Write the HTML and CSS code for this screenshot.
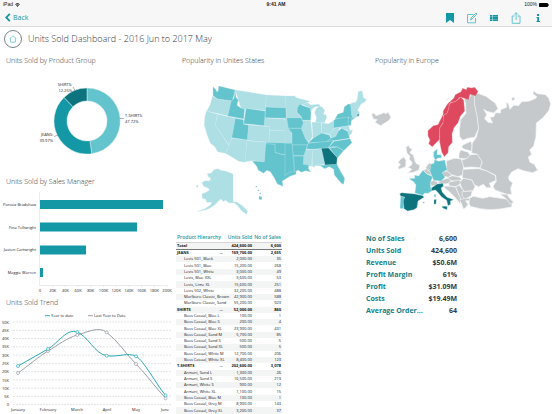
FILE: index.html
```html
<!DOCTYPE html>
<html lang="en">
<head>
<meta charset="utf-8">
<meta name="viewport" content="width=device-width, initial-scale=1">
<title>Units Sold Dashboard</title>
<link rel="stylesheet" href="styles.css">
</head>
<body>
<header class="topbar">
  <div class="status">
    <span class="status-left">iPad
      <svg class="wifi" viewBox="0 0 12 10" aria-hidden="true"><path d="M0 3Q6-2 12 3L10.700 4.500Q6 .8 1.300 4.500ZM2.300 5.500Q6 2.500 9.700 5.500L8.300 7Q6 5.200 3.700 7ZM4.500 8Q6 6.800 7.500 8L6 9.700Z"/></svg>
    </span>
    <strong class="clock">9:41 AM</strong>
    <span class="status-right">100%
      <svg class="battery" viewBox="0 0 20 8" aria-hidden="true"><rect width="18" height="8" rx="1.500"/><rect x="18.500" y="2.500" width="1.500" height="3"/></svg>
    </span>
  </div>
  <nav class="toolbar">
    <a class="back" href="#"><svg class="chevron" viewBox="0 0 6 10" aria-hidden="true"><path d="M5 1L1 5L5 9"/></svg>Back</a>
    <div class="tools">
      <button type="button" aria-label="Bookmark"><svg viewBox="0 0 12 12"><path class="fill" d="M2 1H10V11L6 8L2 11Z"/></svg></button>
      <button type="button" aria-label="Edit"><svg viewBox="0 0 12 12"><path class="line" d="M7.500 2.500H1.500V10.800H9.500V6M4.500 8L5 6L10 1L11 2L6 7Z"/></svg></button>
      <button type="button" aria-label="List"><svg viewBox="0 0 12 12"><path class="fill" d="M2 3H4V4.800H2ZM4.500 3H10V4.800H4.500ZM2 5.100H4V6.900H2ZM4.500 5.100H10V6.900H4.500ZM2 7.200H4V9H2ZM4.500 7.200H10V9H4.500Z"/></svg></button>
      <button type="button" aria-label="Share"><svg viewBox="0 0 12 12"><path class="line" d="M4.500 4H2.200V11.300H10V4H7.700M6.100 8V.8M4.200 2.600L6.100.7L8 2.600"/></svg></button>
      <button type="button" aria-label="Information"><svg viewBox="0 0 12 12"><path class="fill" d="M5 2H7V4H5ZM4.500 5H7V9H8V10H4.500V9H5.200V6H4.500Z"/></svg></button>
    </div>
  </nav>
</header>

<div class="title-row">
  <a class="home" href="#" aria-label="Home"><svg viewBox="0 0 10 10"><path d="M.8 4.700L5 1L9.200 4.700M2 4V9H8V4"/></svg></a>
  <h1>Units Sold Dashboard - 2016 Jun to 2017 May</h1>
</div>

<main class="dashboard">
  <div class="column">
    <section>
      <h2>Units Sold by Product Group</h2>
      <svg class="chart" viewBox="0 67 176 109" role="img" aria-label="Share by product group">
        <g class="donut">
          <path class="mid" d="M87 88A33 33 0 0 1 91.700 153.700L89.900 140.800A20 20 0 0 0 87 101Z"/>
          <path class="teal" d="M91.700 153.700A33 33 0 0 1 64 97.400L73 106.700A20 20 0 0 0 89.900 140.800Z"/>
          <path class="dark" d="M64 97.400A33 33 0 0 1 87 88V101A20 20 0 0 0 73 106.700Z"/>
        </g>
        <path class="leader" d="M120 118.500H124M54 136.500L58 135M73 87L75 90.500"/>
        <g class="label"><text x="72" y="86" text-anchor="end">SHIRTS:</text><text x="72" y="92" text-anchor="end">12.25%</text>
        <text x="125" y="117">T-SHIRTS:</text><text x="125" y="123">47.72%</text>
        <text x="53" y="136" text-anchor="end">JEANS:</text><text x="53" y="142" text-anchor="end">39.97%</text></g>
      </svg>
    </section>
    <section>
      <h2>Units Sold by Sales Manager</h2>
      <svg class="chart" viewBox="0 188 176 109" role="img" aria-label="Units by sales manager">
        <path class="axis" d="M39.500 192V285.500H167.500M52.700 285V287M65.400 285V287M78.100 285V287M90.800 285V287M103.500 285V287M116.200 285V287M128.900 285V287M141.600 285V287M154.300 285V287M167 285V287"/>
        <g class="teal"><rect x="40" y="200" width="123" height="9"/><rect x="40" y="222.500" width="97" height="9"/><rect x="40" y="245.500" width="46" height="9"/><rect x="40" y="268" width="3" height="9"/></g>
        <g class="label" text-anchor="end"><text x="36" y="206">Parvaiz Bradshaw</text><text x="36" y="229">Fina Tellwright</text><text x="36" y="251">Justen Cartwright</text><text x="36" y="274">Maggie Warren</text></g>
        <g class="label" text-anchor="middle"><text x="40" y="292">0</text><text x="52.700" y="292">20K</text><text x="65.400" y="292">40K</text><text x="78.100" y="292">60K</text><text x="90.800" y="292">80K</text><text x="103.500" y="292">100K</text><text x="116.200" y="292">120K</text><text x="128.900" y="292">140K</text><text x="141.600" y="292">160K</text><text x="154.300" y="292">180K</text><text x="167" y="292">200K</text></g>
      </svg>
    </section>
    <section>
      <h2>Units Sold Trend</h2>
      <svg class="chart" viewBox="0 309 176 105" role="img" aria-label="Monthly trend">
        <path class="grid" d="M13 322H172M13 330.300H172M13 338.600H172M13 346.800H172M13 355.100H172M13 363.400H172M13 371.600H172M13 379.900H172M13 388.200H172M13 396.400H172M13 404.700H172"/>
        <g class="label" text-anchor="end"><text x="9" y="324">50K</text><text x="9" y="332">45K</text><text x="9" y="340">40K</text><text x="9" y="348">35K</text><text x="9" y="357">30K</text><text x="9" y="365">25K</text><text x="9" y="373">20K</text><text x="9" y="382">15K</text><text x="9" y="390">10K</text><text x="9" y="398">5K</text><text x="9" y="406">0</text></g>
        <g class="label" text-anchor="middle"><text x="18" y="411">January</text><text x="48" y="411">February</text><text x="77" y="411">March</text><text x="107" y="411">April</text><text x="136" y="411">May</text><text x="165" y="411">June</text></g>
        <g class="series last"><path d="M88 315.700H93M18 373C28 366 38 357 48 351S67 338 77.300 335S99 326 106.700 332.300C118 341 126 354 136 364S156 388 165.500 398.300"/><circle cx="18" cy="373" r="1.500"/><circle cx="48" cy="351" r="1.500"/><circle cx="77.300" cy="335" r="1.500"/><circle cx="106.700" cy="332.300" r="1.500"/><circle cx="136" cy="364" r="1.500"/><circle cx="165.500" cy="398.300" r="1.500"/></g>
        <g class="series now"><path d="M45 315.700H50M18 366C28 360 38 355 48 349S67 328 77.300 332S95 354 106.700 355.700S128 352 136 356.300S156 384 165.500 395.300"/><circle cx="18" cy="366" r="1.500"/><circle cx="48" cy="349" r="1.500"/><circle cx="77.300" cy="332" r="1.500"/><circle cx="106.700" cy="355.700" r="1.500"/><circle cx="136" cy="356.300" r="1.500"/><circle cx="165.500" cy="395.300" r="1.500"/></g>
        <g class="label"><text x="51" y="317">Year to date</text><text x="94" y="317">Last Year to Date</text></g>
      </svg>
    </section>
  </div>

  <div class="column">
    <section>
      <h2>Popularity in Unites States</h2>
      <svg class="chart map" viewBox="176 67 190 166" role="img" aria-label="Map of the United States">
        <g transform="translate(195 75) scale(.3333)">
          <g class="light">
            <path d="M53 64L68 73L110 78L98 122L36 108L46 88Z"/>
            <path d="M34 108L67 118L61 150L102 212L92 235L68 230L60 215L46 204L36 178L28 150L30 125Z"/>
            <path d="M68 118L122 130L110 188L102 210L61 150Z"/>
            <path d="M121 45L214 60L211 106L153 100L149 104L138 98L130 75Z"/>
            <path d="M161 150L224 155L222 202L156 196Z"/>
            <path d="M110 190L156 196L150 262L132 259L92 235L102 212Z"/>
            <path d="M156 197L213 202L208 260L170 257L150 260Z"/>
            <path d="M214 60L271 63L274 98L212 96Z"/>
            <path d="M210 129L265 132L280 140L290 168L224 165V155L208 152Z"/>
            <path d="M224 166L290 168L292 203L222 202Z"/>
            <path d="M37 296L50 294L55 286L68 281L80 287L91 288L114 297V380L126 382L144 394L158 409L154 418L139 406L128 392L118 384L101 383L91 375L86 380L77 372L68 380L60 389L45 399L31 405L8 409L28 402L46 391L51 382L36 382L32 373L22 370L21 357L37 350L44 344L38 338L26 334L21 322L32 317L43 319L48 310L40 305Z"/>
            <circle cx="7" cy="334" r="3"/>
          </g>
          <g class="mid">
            <path d="M54 35L62 43L66 51L70 46L71 33L121 45L112 78L68 72L54 62Z"/>
            <path d="M121 45L123 67L130 75L126 91L138 99L149 103L146 132L98 123L108 80L117 70Z"/>
            <path d="M153 100L211 108L208 152L146 146Z"/>
            <path d="M121 130L146 134V148L161 150L157 195L110 188Z"/>
            <path d="M212 96L273 98L275 132L265 130L210 128Z"/>
            <path d="M213 202L292 204L297 243L272 240L255 237L240 232V208H213Z"/>
            <path d="M212 206L240 208V232L255 237L272 240L300 243L305 270L303 298L285 304L262 318L264 334L247 327L238 309L226 290L215 286L206 295L190 286L185 274L172 258L208 260Z"/>
            <path d="M192 364L201 366L200 374L192 373Z"/>
            <circle cx="184" cy="335" r="2"/><circle cx="190" cy="346" r="2"/><circle cx="196" cy="355" r="2"/>
          </g>
        </g>
        <g transform="translate(285 75) scale(.3333)">
          <g class="light">
            <path d="M1 63H29L34 68L50 73L75 79L53 88L38 98L36 112L50 128H5L3 95Z"/>
            <path d="M52 88L68 83L77 90L102 88L106 94L92 95L83 100L79 107L74 99Z"/>
            <path d="M92 141L95 128L89 113L94 101L103 94L111 96L119 106L115 119L121 118L125 127L118 143Z"/>
            <path d="M50 137H77L82 185L72 202L61 190L48 160Z"/>
            <path d="M81 142H108L110 175L84 190Z"/>
            <path d="M110 143L130 147L145 138L148 158L135 178L110 173Z"/>
            <path d="M135 178L148 160L165 157L158 171L150 185L138 190Z"/>
            <path d="M197 86L211 81L218 106L224 113L220 124L202 131L199 119Z"/>
            <path d="M211 87L217 72L220 50L231 47L235 68L245 74L238 82L228 87L218 105Z"/>
            <path d="M162 158L191 152L195 167L202 164L200 175L192 183L187 165Z"/>
            <path d="M58 224H82L80 274L54 270V240Z"/>
            <path d="M82 224L109 221L119 268L90 271L88 277L82 274Z"/>
            <path d="M0 128H5L17 160L21 205H0Z"/>
          </g>
          <g class="mid">
            <path d="M5 128H49L55 143L49 160H10Z"/>
            <path d="M37 98L44 88L55 92L76 100L78 112L77 136H52L49 125L36 112Z"/>
            <path d="M10 160H49L61 190L71 204L68 210H21V175Z"/>
            <path d="M21 210H68L64 222L56 242H25Z"/>
            <path d="M26 243H56L55 268L72 271L70 280L77 291L62 287L49 292L40 286L28 290Z"/>
            <path d="M0 205H21L28 290L14 291L0 302Z"/>
            <path d="M146 136L153 131L188 124L194 137L190 152L146 159Z"/>
            <path d="M150 132L158 118L175 112L178 95L190 87L197 88L200 120L203 130L213 127L198 137L190 126Z"/>
            <path d="M190 127L200 131L197 152L189 151Z"/>
            <path d="M122 201L138 190L152 184L160 168L170 160L188 169L194 190Z"/>
            <path d="M70 204L84 190L110 174L133 180L138 191L122 201Z"/>
            <path d="M64 222L70 205L145 197L130 219L82 223Z"/>
            <path d="M130 218L147 199L195 191L201 203L188 216L176 227L158 216L145 215Z"/>
            <path d="M133 218L158 216L176 227L157 249Z"/>
            <path d="M90 272L120 270L155 266L164 284L179 310L176 328L169 325L148 300L146 283L133 275L119 281L107 273Z"/>
          </g>
          <g class="dark"><path d="M109 220L131 219L137 226L157 248L155 268L120 270Z"/><path d="M216 119L223 117L221 123L217 123Z"/></g>
        </g>
      </svg>
    </section>
    <div class="table-wrap">
      <table>
        <colgroup><col><col class="units"><col class="sales"></colgroup>
        <thead><tr><th scope="col">Product Hierarchy</th><th scope="col">Units Sold</th><th scope="col">No of Sales</th></tr></thead>
        <tbody>
          <tr class="total"><th scope="row">Total</th><td>424,600.00</td><td>6,600</td></tr>
          <tr class="group"><th scope="row"><div><span>JEANS</span><span>...</span></div></th><td>169,700.00</td><td>2,655</td></tr>
          <tr><th scope="row">Levis 501, Black</th><td>2,000.00</td><td>35</td></tr>
          <tr><th scope="row">Levis 501, Blue</th><td>15,200.00</td><td>268</td></tr>
          <tr><th scope="row">Levis 501, White</th><td>3,000.00</td><td>49</td></tr>
          <tr><th scope="row">Levis, Blue XXL</th><td>3,600.00</td><td>53</td></tr>
          <tr><th scope="row">Levis, Lime XL</th><td>15,600.00</td><td>251</td></tr>
          <tr><th scope="row">Levis 502, White</th><td>32,200.00</td><td>488</td></tr>
          <tr><th scope="row">Marlboro Classic, Brown</th><td>42,900.00</td><td>588</td></tr>
          <tr><th scope="row">Marlboro Classic, Sand</th><td>55,200.00</td><td>923</td></tr>
          <tr class="group"><th scope="row"><div><span>SHIRTS</span><span>...</span></div></th><td>52,000.00</td><td>860</td></tr>
          <tr><th scope="row">Boss Casual, Blue L</th><td>100.00</td><td>1</td></tr>
          <tr><th scope="row">Boss Casual, Blue S</th><td>200.00</td><td>4</td></tr>
          <tr><th scope="row">Boss Casual, Blue XL</th><td>23,900.00</td><td>431</td></tr>
          <tr><th scope="row">Boss Casual, Sand M</th><td>5,700.00</td><td>85</td></tr>
          <tr><th scope="row">Boss Casual, Sand S</th><td>500.00</td><td>5</td></tr>
          <tr><th scope="row">Boss Casual, Sand XL</th><td>500.00</td><td>5</td></tr>
          <tr><th scope="row">Boss Casual, White M</th><td>12,700.00</td><td>206</td></tr>
          <tr><th scope="row">Boss Casual, White XL</th><td>8,400.00</td><td>123</td></tr>
          <tr class="group"><th scope="row"><div><span>T-SHIRTS</span><span>...</span></div></th><td>202,600.00</td><td>3,078</td></tr>
          <tr><th scope="row">Armani, Sand L</th><td>1,300.00</td><td>26</td></tr>
          <tr><th scope="row">Armani, Sand S</th><td>16,500.00</td><td>219</td></tr>
          <tr><th scope="row">Armani, White S</th><td>900.00</td><td>12</td></tr>
          <tr><th scope="row">Armani, White XL</th><td>1,100.00</td><td>15</td></tr>
          <tr><th scope="row">Boss Casual, Blue M</th><td>100.00</td><td>1</td></tr>
          <tr><th scope="row">Boss Casual, Grey M</th><td>8,900.00</td><td>143</td></tr>
          <tr><th scope="row">Boss Casual, Grey XL</th><td>3,200.00</td><td>37</td></tr>
        </tbody>
      </table>
    </div>
  </div>

  <div class="column europe">
    <section>
      <h2>Popularity in Europe</h2>
      <svg class="chart map" viewBox="366 67 186 166" role="img" aria-label="Map of Europe">
        <g transform="translate(366 75) scale(.3333)">
          <g class="gray">
            <path d="M17 118L24 114L30 122L43 118L53 113L60 116L66 111L75 127L69 136L53 146L44 152L27 142L34 134L22 132Z"/>
            <path d="M120 217L128 211L131 219L139 222L132 233L142 241L147 258L151 266L162 271L158 286L142 292L125 294L138 283L126 277L137 270L138 261L129 253L132 244L123 235Z"/>
            <path d="M101 255L113 246L120 256L119 275L99 283L96 276L104 269L97 263Z"/>
            <path d="M173 286L183 280L193 291L196 301L183 297Z"/>
            <path d="M179 278L189 264L197 266L194 290L183 284Z"/>
            <path d="M191 322L202 316L217 322L211 331L197 333Z"/>
            <path d="M214 322L227 315L251 308L256 322L240 327L227 326Z"/>
            <path d="M227 292L243 288L258 300L247 307L229 303Z"/>
            <path d="M241 258L265 250L285 252L293 270L291 300L275 305L257 299L242 288Z"/>
            <path d="M244 308L260 302L281 307L288 314L274 319L256 317Z"/>
            <path d="M247 322L280 315L288 324L270 335L250 333Z"/>
            <path d="M232 333L252 334L269 336L276 353L286 373L282 385L268 368L249 349L239 342Z"/>
            <path d="M269 335L280 331L299 355L300 375L287 378L279 360Z"/>
            <path d="M281 374L298 370L314 370L310 377L299 377L306 388L299 398L292 402L288 390Z"/>
            <path d="M281 323L293 309L318 315L327 335L321 347L296 350L288 340Z"/>
            <path d="M288 350L319 348L315 363L298 372L289 364Z"/>
            <path d="M292 209L315 199L318 211L317 229L293 222L287 216Z"/>
            <path d="M279 237L284 225L305 231L313 241L302 252L279 250Z"/>
            <path d="M287 256L303 250L314 239L336 238L349 260L343 278L314 276L294 278Z"/>
            <path d="M291 283L339 281L363 288L388 302L390 316L370 325L376 338L362 338L352 328L337 335L325 329L318 315L289 309Z"/>
            <path d="M284 134L300 115L299 87L294 68L308 72L318 56L327 62L327 90L334 122L338 160L326 187L305 190L290 196L281 185L280 165Z"/>
            <path d="M325 62L335 55L360 64L388 85L396 101L383 114L363 109L353 103L362 118L356 131L366 142L380 144L372 126L383 126L389 113L404 114L404 104L422 97L421 82L427 86L432 103L443 91L458 92L467 80L488 79L507 71L513 66L501 56L503 48L514 56L538 59L548 69L554 87L549 106L531 128L511 144L510 185L503 213L491 225L497 238L487 246L492 262L505 268L515 286L500 293L476 288L456 281L437 291L428 305L429 315L440 324L434 340L437 358L423 358L409 353L387 345L381 334L391 319L389 301L363 288L342 280L349 261L334 238L317 234L319 205L331 187L338 160L333 122L326 90Z"/>
            <path d="M311 370L322 364L350 370L371 365L398 369L426 373L439 380L437 396L401 402L372 404L342 401L313 394L309 385Z"/>
            <path d="M402 357L423 358L431 370L443 382L432 388L421 371Z"/>
            <path d="M436 72L442 66L447 71L440 78Z"/>
          </g>
          <g class="red">
            <path d="M186 167L202 152L216 149L231 119L232 107L245 86L263 70L268 59L285 50L290 40L301 44L304 37L317 39L326 37L336 49L329 63L312 58L308 74L292 69L281 67L270 79L253 83L244 114L232 121L233 140L221 159L220 194L209 205L199 215L188 206L192 195L186 183Z"/>
            <path d="M233 121L244 114L252 85L270 79L284 67L293 75L296 108L283 124L276 143L264 158L258 177L259 202L248 215L246 233L235 245L227 230L221 200L221 159L231 145Z"/>
            <path d="M240 76L249 69M247 92L258 75M262 224L265 220"/>
          </g>
          <g class="mid">
            <path d="M203 231L214 221L213 239L225 239L227 248L216 249L208 255L203 246Z"/>
            <path d="M195 268L204 265L206 254L218 259L236 255L243 284L228 293L237 307L225 318L203 316L196 299L192 289Z"/>
            <path d="M129 311L147 310L145 301L158 303L171 286L182 297L200 305L193 323L194 339L198 347L186 355L176 354L170 361L147 354L150 330L143 320Z"/>
            <path d="M104 365L116 366L112 401L102 400Z"/><path d="M206 357L210 359L208 368L204 364Z"/>
          </g>
          <g class="dark">
            <path d="M101 356L107 353L147 357L171 362L174 367L156 378L153 398L143 404L125 408L114 401L112 378L116 366L104 364Z"/>
            <path d="M196 339L214 327L231 325L232 334L225 339L229 352L243 367L263 374L253 378L254 388L246 392L242 376L227 366L214 350L208 345L197 347Z"/>
            <path d="M228 394L244 394L243 404L230 399Z"/><path d="M204 374L211 373L210 387L204 388Z"/><path d="M170 382L175 381L174 385Z"/>
          </g>
        </g>
      </svg>
    </section>
    <dl class="metrics">
      <div><dt>No of Sales</dt><dd>6,600</dd></div>
      <div><dt>Units Sold</dt><dd>424,600</dd></div>
      <div><dt>Revenue</dt><dd>$50.6M</dd></div>
      <div><dt>Profit Margin</dt><dd>61%</dd></div>
      <div><dt>Profit</dt><dd>$31.09M</dd></div>
      <div><dt>Costs</dt><dd>$19.49M</dd></div>
      <div><dt>Average Order...</dt><dd>64</dd></div>
    </dl>
  </div>
</main>
</body>
</html>
```
FILE: styles.css
```css
:root {
  --teal: #1598a5;
  --mid: #64c4ce;
  --light: #addfe4;
  --dark: #0d737c;
  --ink: #34383c;
}

* { box-sizing: border-box; }

body {
  margin: 0;
  height: 100vh;
  display: flex;
  flex-direction: column;
  background: #fff;
  color: var(--ink);
  font-family: "Open Sans", "Noto Sans", sans-serif;
}

h1, h2, dl, dd { margin: 0; }
svg { display: block; }
a { color: inherit; text-decoration: none; }

.topbar {
  background: #f7f7f7;
  border-bottom: 1px solid #dcdcdc;
}

.status {
  display: grid;
  grid-template-columns: 1fr auto 1fr;
  align-items: center;
  height: 9px;
  padding: 0 3px;
  color: #222;
  font-family: "Liberation Sans", sans-serif;
  font-size: 5px;
  line-height: 9px;
}

.status-left, .status-right { display: flex; align-items: center; gap: 2px; }
.status-right { justify-content: flex-end; }
.wifi { width: 5px; height: 4px; }
.battery { width: 10px; height: 4px; fill: #000; }

.toolbar {
  display: flex;
  align-items: center;
  justify-content: space-between;
  height: 17px;
  padding: 0 3px 0 5px;
  color: var(--teal);
}

.back { display: flex; align-items: center; gap: 2px; font-size: 7px; line-height: 12px; }
.chevron { width: 6px; height: 9px; fill: none; stroke: currentColor; stroke-width: 2; }
.tools { display: flex; }
.tools button {
  display: grid;
  place-items: center;
  width: 22px;
  height: 16px;
  padding: 0;
  border: 0;
  background: none;
  color: inherit;
}
.tools svg { width: 12px; height: 12px; }
.fill { fill: currentColor; }
.line { fill: none; stroke: var(--mid); stroke-width: 1; }

.title-row {
  display: flex;
  align-items: center;
  gap: 6px;
  height: 28px;
  padding: 0 4px 4px;
}
.home {
  display: grid;
  place-items: center;
  width: 18px;
  height: 18px;
  border: 1px solid #78838a;
  border-radius: 50%;
}
.home svg { width: 8px; height: 8px; fill: none; stroke: var(--mid); stroke-width: 1; }

h1 { font-size: 9px; font-weight: 300; line-height: 14px; }
h2 { padding-left: 6px; font-size: 7px; font-weight: 300; line-height: 12px; white-space: nowrap; }

.dashboard {
  flex: 1;
  min-height: 0;
  display: grid;
  grid-template-columns: 176fr 190fr 186fr;
}
.column { display: flex; flex-direction: column; min-width: 0; min-height: 0; }
.europe h2 { padding-left: 9px; }

.chart { width: 100%; height: auto; overflow: visible; }
.teal { fill: var(--teal); }
.mid { fill: var(--mid); }
.light { fill: var(--light); }
.dark { fill: var(--dark); }
.gray { fill: #c5c9cc; }
.red { fill: #de4960; }
.map path { stroke: #c2e8ec; stroke-width: 1; stroke-linejoin: round; }
.map .gray path { stroke: #f3f4f5; stroke-width: 2; }
.map .red path { stroke: #f0a3ae; }
.donut path { stroke: #d6eff2; stroke-width: 0.5; }
.leader { fill: none; stroke: #666; stroke-width: 0.5; }
.label { fill: #1c2024; font-family: "Open Sans", sans-serif; font-size: 4px; }
.axis { fill: none; stroke: #d5d8da; stroke-width: 0.5; }
.grid { fill: none; stroke: #c4c7c9; stroke-width: 0.5; stroke-dasharray: 2 1; }
.series { fill: none; stroke-width: 1; }
.series circle { fill: #fff; stroke-width: 0.7; }
.now { stroke: #28a9b6; }
.last { stroke: #9ba1a6; }

.table-wrap { flex: 1; min-height: 0; padding-right: 84px; }
table {
  width: 100%;
  height: 100%;
  table-layout: fixed;
  border-collapse: collapse;
  color: #1c2024;
  font-family: "Open Sans", sans-serif;
  font-size: 4px;
  line-height: 6px;
  white-space: nowrap;
}
.units { width: 27px; }
.sales { width: 30px; }
th, td { padding: 0; font-weight: 400; text-align: right; }
th:first-child { padding-left: 8px; text-align: left; }
th:last-child, td:last-child { padding-right: 1px; }
thead th { height: 9px; color: var(--teal); font-size: 5px; font-weight: 600; }
thead th:first-child { padding-left: 1px; }
tbody tr:nth-child(odd) { background: #f3f4f4; }
.total th, .total td { border-top: 1px solid #d5d5d5; border-bottom: 1px solid #777; }
.total th, .total td, .group th, .group td { color: #111; font-weight: 700; }
.total th:first-child, .group th:first-child { padding-left: 1px; }
.group div { display: flex; justify-content: space-between; padding-right: 2px; }

.metrics { width: 91px; font-size: 7px; font-weight: 700; line-height: 12px; }
.metrics div { display: flex; justify-content: space-between; white-space: nowrap; }
.metrics dt { color: #128088; }
```
